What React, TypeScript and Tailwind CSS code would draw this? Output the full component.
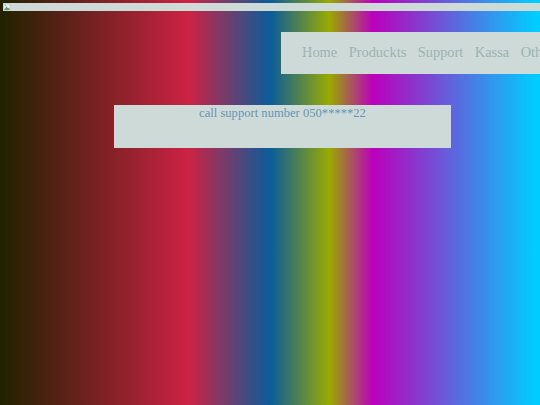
const serif = "font-['Liberation_Serif',serif]";

export default function App() {
  return (
    <div className={`h-[405px] w-[540px] overflow-hidden bg-[linear-gradient(to_right,#222200_0.5%,#cc2244_35%,#0a5c9a_50%,#99aa00_61%,#bb00bb_69%,#00ccff_99%)] ${serif}`}>
      {/* broken banner image */}
      <div className="ml-[3px] mt-[3px] flex h-[8px] items-start overflow-hidden bg-[#cddad8]">
        <svg width="8" height="8" viewBox="0 0 16 16" className="shrink-0">
          <path d="M0.5 0.5H10L15.5 6V15.5H0.5Z" fill="#e8eff5" stroke="#a9a9a9" />
          <path d="M2 14L7 7L10 11L13 9V14Z" fill="#5f9e58" />
          <path d="M3 3H7V6H3Z" fill="#9db8d8" />
        </svg>
      </div>

      <div className="mt-[21px] flex justify-end">
        <nav className="flex h-[42px] w-[259px] items-center gap-[11.5px] overflow-hidden whitespace-nowrap bg-[#cddad8] pl-[21px] text-[14.4px] text-[#9db3b3]">
          <a>Home</a>
          <a>Produckts</a>
          <a>Support</a>
          <a>Kassa</a>
          <a>Other</a>
        </nav>
      </div>

      <div className="ml-[114px] mt-[31px] h-[43px] w-[337px] bg-[#cddad8] text-center text-[12.6px] leading-[16px] text-[#6a95b5]">
        call support number 050*****22
      </div>
    </div>
  );
}
